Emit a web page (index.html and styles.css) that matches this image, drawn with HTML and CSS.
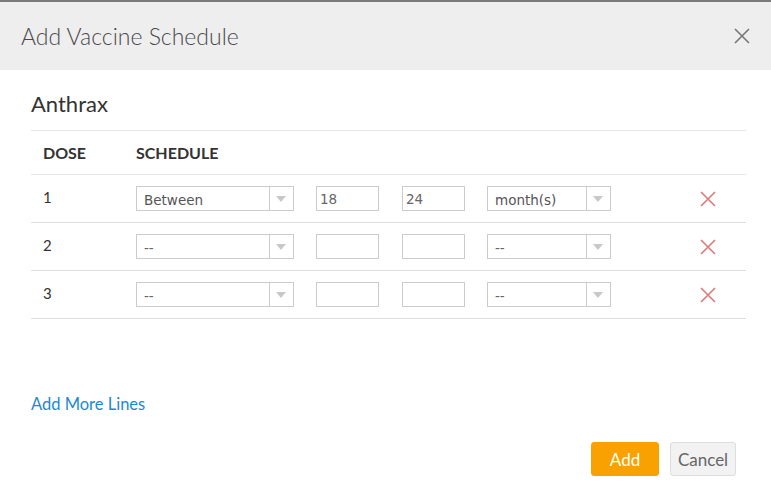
FILE: index.html
```html
<!DOCTYPE html>
<html lang="en">
<head>
    <meta charset="UTF-8">
    <meta name="viewport" content="width=device-width, initial-scale=1.0">
    <title>Add Vaccine Schedule</title>
    <link rel="stylesheet" href="styles.css">
</head>
<body>
    <div class="modal">
        <!-- header -->
        <div class="modal-header">
            <span class="modal-title">Add Vaccine Schedule</span>
            <button class="close-btn" aria-label="Close">
                <svg width="16" height="16" viewBox="0 0 16 16"><path d="M1 1L15 15M15 1L1 15" stroke="#777" stroke-width="1.6" fill="none"/></svg>
            </button>
        </div>

        <div class="modal-body">
            <h3 class="vaccine-name">Anthrax</h3>

            <div class="schedule-table">
                <div class="row head">
                    <div class="col-dose">Dose</div>
                    <div class="col-schedule">Schedule</div>
                </div>

                <div class="row">
                    <div class="col-dose">1</div>
                    <div class="col-schedule">
                        <div class="select type"><span>Between</span><i class="arrow"></i></div>
                        <div class="input">18</div>
                        <div class="input">24</div>
                        <div class="select unit"><span>month(s)</span><i class="arrow"></i></div>
                    </div>
                    <div class="col-remove">
                        <svg width="16" height="16" viewBox="0 0 16 16"><path d="M1 1L15 15M15 1L1 15" stroke="#df7a7a" stroke-width="1.6" fill="none"/></svg>
                    </div>
                </div>

                <div class="row">
                    <div class="col-dose">2</div>
                    <div class="col-schedule">
                        <div class="select type"><span class="empty">--</span><i class="arrow"></i></div>
                        <div class="input"></div>
                        <div class="input"></div>
                        <div class="select unit"><span class="empty">--</span><i class="arrow"></i></div>
                    </div>
                    <div class="col-remove">
                        <svg width="16" height="16" viewBox="0 0 16 16"><path d="M1 1L15 15M15 1L1 15" stroke="#df7a7a" stroke-width="1.6" fill="none"/></svg>
                    </div>
                </div>

                <div class="row">
                    <div class="col-dose">3</div>
                    <div class="col-schedule">
                        <div class="select type"><span class="empty">--</span><i class="arrow"></i></div>
                        <div class="input"></div>
                        <div class="input"></div>
                        <div class="select unit"><span class="empty">--</span><i class="arrow"></i></div>
                    </div>
                    <div class="col-remove">
                        <svg width="16" height="16" viewBox="0 0 16 16"><path d="M1 1L15 15M15 1L1 15" stroke="#df7a7a" stroke-width="1.6" fill="none"/></svg>
                    </div>
                </div>
            </div>

            <a class="add-lines" href="#">Add More Lines</a>
        </div>

        <!-- footer -->
        <div class="modal-footer">
            <button class="btn btn-primary">Add</button>
            <button class="btn btn-default">Cancel</button>
        </div>
    </div>
</body>
</html>
```

FILE: styles.css
```css
body {
    margin: 0;
    font-family: Lato, "Open Sans", sans-serif;
    background-color: #fff;
    color: #333;
}

.modal {
    border-top: 2px solid #7b7b7b;
}

/* header */
.modal-header {
    height: 68px;
    background-color: #eee;
    padding: 0 21px;
    display: flex;
    justify-content: space-between;
    align-items: center;
}

.modal-title {
    font-size: 23px;
    font-weight: 300;
    color: #4a4a4a;
}

.close-btn {
    background: none;
    border: none;
    padding: 0;
    display: flex;
    cursor: pointer;
}

/* body */
.modal-body {
    padding: 21px 25px 0 31px;
}

.vaccine-name {
    margin: 0 0 14px 0;
    font-size: 22px;
    line-height: 25px;
    font-weight: 400;
    color: #333;
}

.schedule-table {
    border-top: 1px solid #e6e6e6;
}

.row {
    display: flex;
    align-items: center;
    height: 47px;
    border-bottom: 1px solid #ddd;
    font-size: 15px;
}

.row.head {
    height: 43px;
    font-size: 16px;
    font-weight: bold;
    text-transform: uppercase;
    border-bottom-color: #e6e6e6;
}

.col-dose {
    width: 93px;
    padding-left: 12px;
    margin-top: -4px;
}

.row.head .col-dose {
    margin-top: 0;
}

.col-schedule {
    flex: 1;
    display: flex;
    align-items: center;
    gap: 22px;
}

.col-remove {
    width: 39px;
    display: flex;
    justify-content: flex-start;
}

.col-remove svg {
    margin-left: -7px;
}

/* form controls */
.select,
.input {
    box-sizing: border-box;
    height: 25px;
    border: 1px solid #ccc;
    font-family: "DejaVu Sans", Verdana, sans-serif;
    font-size: 13.5px;
    color: #555;
    display: flex;
    align-items: center;
}

.select span {
    flex: 1;
    padding-left: 7px;
    padding-top: 3px;
}

.select .empty {
    color: #666;
}

.select .arrow {
    width: 23px;
    height: 100%;
    border-left: 1px solid #ccc;
    position: relative;
}

.select .arrow::after {
    content: "";
    position: absolute;
    left: 6px;
    top: 9px;
    border-left: 5px solid transparent;
    border-right: 5px solid transparent;
    border-top: 6px solid #c8c8c8;
}

.select.type {
    width: 158px;
}

.select.unit {
    width: 124px;
}

.input {
    width: 63px;
    padding-left: 3px;
    color: #666;
}

.input + .input {
    margin-left: 1px;
}

.add-lines {
    display: inline-block;
    margin-top: 75px;
    font-size: 16.5px;
    color: #1a8ad0;
    text-decoration: none;
}

/* footer */
.modal-footer {
    display: flex;
    justify-content: flex-end;
    gap: 11px;
    padding: 28px 35px 0 0;
}

.btn {
    height: 34px;
    border-radius: 3px;
    font-family: Lato, sans-serif;
    font-size: 17px;
    cursor: pointer;
}

.btn-primary {
    width: 68px;
    background-color: #f8a100;
    border: 1px solid #f8a100;
    color: #fff;
}

.btn-default {
    width: 66px;
    background-color: #f2f2f2;
    border: 1px solid #ddd;
    color: #666;
}
```
